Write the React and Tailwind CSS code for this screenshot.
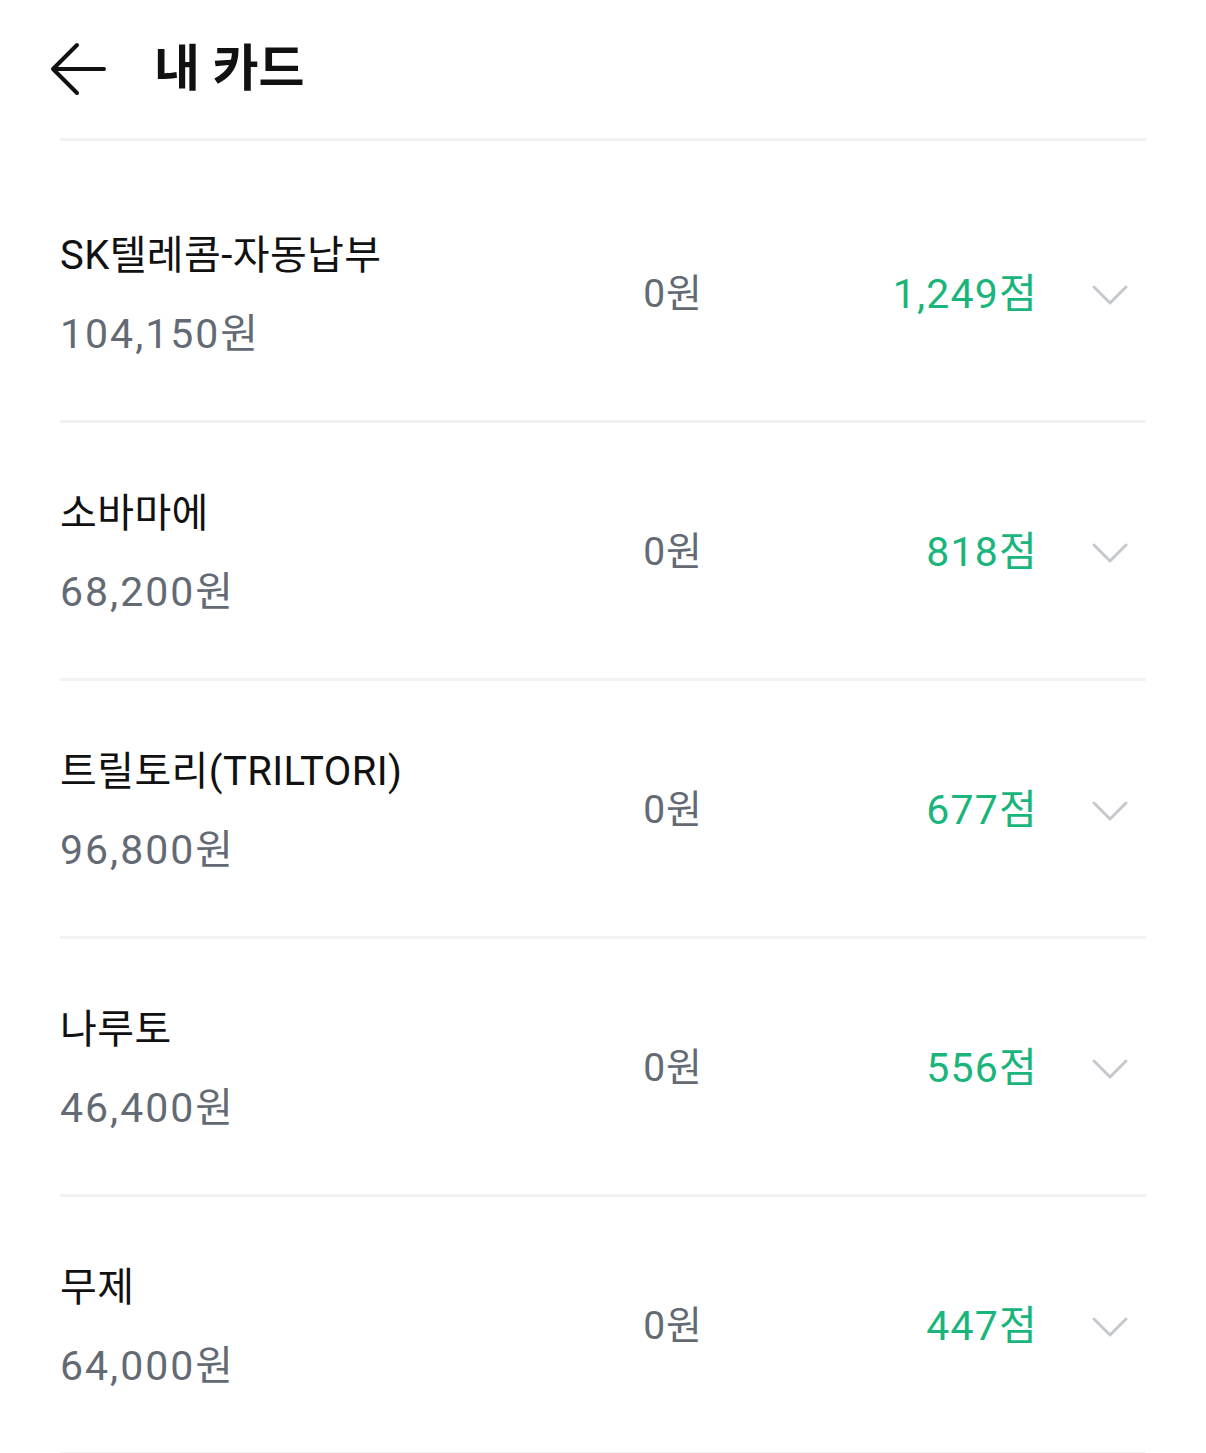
import React from 'react';

const cards = [
  { name: 'SK텔레콤-자동납부', amount: '104,150원', used: '0원', points: '1,249점' },
  { name: '소바마에', amount: '68,200원', used: '0원', points: '818점' },
  { name: '트릴토리(TRILTORI)', amount: '96,800원', used: '0원', points: '677점' },
  { name: '나루토', amount: '46,400원', used: '0원', points: '556점' },
  { name: '무제', amount: '64,000원', used: '0원', points: '447점' },
];

const font = { fontFamily: 'Roboto, "Noto Sans CJK KR", sans-serif' };

const Chevron = () => (
  <svg width="36" height="20" viewBox="0 0 36 20" fill="none">
    <path d="M2 2 L18 18 L34 2" stroke="#c5c8cd" strokeWidth="3" strokeLinecap="round" strokeLinejoin="round" />
  </svg>
);

const CardRow = ({ card, first }) => (
  <div className={`flex items-center border-b-[3px] border-[#f2f2f2] ${first ? 'h-[282px] pt-[28px]' : 'h-[258px] pt-[4px]'}`}>
    <div className="flex-1 flex flex-col gap-[26px]">
      <div className="text-[40px] leading-[52px] text-[#111111] tracking-[0.4px]">{card.name}</div>
      <div className="text-[41px] leading-[52px] text-[#646a74] tracking-[2px]">{card.amount}</div>
    </div>
    <div className="text-[39px] text-[#646a74] text-right tracking-[1px] -mr-[3px]">{card.used}</div>
    <div className="w-[338px] text-right text-[41px] text-[#1ab57b] tracking-[1.2px]">{card.points}</div>
    <div className="ml-[54px] mr-[18px] w-[36px] flex items-center">
      <Chevron />
    </div>
  </div>
);

export default function App() {
  return (
    <div className="w-[1206px] min-h-[1453px] bg-white" style={font}>
      <div className="h-[138px] flex items-center pl-[50px]">
        <svg width="56" height="56" viewBox="0 0 56 56" fill="none">
          <path d="M54 28 H4 M27 4 L3 28 L27 52" stroke="#111" strokeWidth="4" strokeLinecap="round" strokeLinejoin="round" />
        </svg>
        <h1 className="ml-[48px] text-[50px] font-bold text-[#111] leading-none">내 카드</h1>
      </div>
      <div className="mx-[60px] border-t-[3px] border-[#f2f2f2]">
        {cards.map((c, i) => (
          <CardRow key={c.name} card={c} first={i === 0} />
        ))}
      </div>
    </div>
  );
}
